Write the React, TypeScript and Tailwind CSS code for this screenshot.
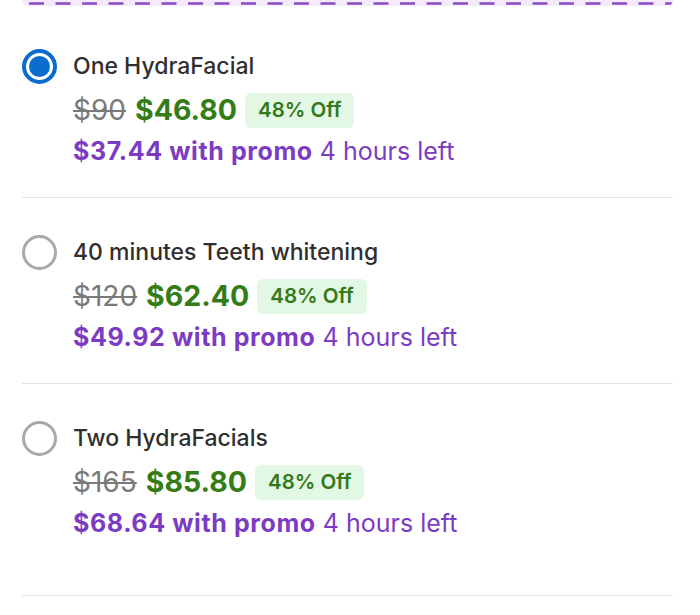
import React from "react";

interface IOption {
  id: number;
  title: string;
  original: string;
  price: string;
  discount: string;
  promo: string;
  timeLeft: string;
}

const options: IOption[] = [
  {
    id: 1,
    title: "One HydraFacial",
    original: "$90",
    price: "$46.80",
    discount: "48% Off",
    promo: "$37.44",
    timeLeft: "4 hours left",
  },
  {
    id: 2,
    title: "40 minutes Teeth whitening",
    original: "$120",
    price: "$62.40",
    discount: "48% Off",
    promo: "$49.92",
    timeLeft: "4 hours left",
  },
  {
    id: 3,
    title: "Two HydraFacials",
    original: "$165",
    price: "$85.80",
    discount: "48% Off",
    promo: "$68.64",
    timeLeft: "4 hours left",
  },
];

const Radio: React.FC<{ checked: boolean }> = ({ checked }) =>
  checked ? (
    <span className="flex items-center justify-center w-[35px] h-[35px] shrink-0 rounded-full border-[4px] border-[#0a6ccf] bg-white">
      <span className="w-[21px] h-[21px] rounded-full bg-[#0a6ccf]" />
    </span>
  ) : (
    <span className="w-[35px] h-[35px] shrink-0 rounded-full border-[3px] border-[#a9a9a9] bg-white" />
  );

const OptionRow: React.FC<{ item: IOption; checked: boolean; last: boolean; first: boolean }> = ({
  item,
  checked,
  last,
  first,
}) => (
  <li
    className={`flex flex-col border-b border-[#e4e4e4] ${first ? "pt-[45px]" : "pt-[39px]"} ${
      last ? "pb-[57px]" : "pb-[31px]"
    }`}
  >
    <div className="flex items-center gap-4 h-[30px]">
      <Radio checked={checked} />
      <span className="text-[23px] font-medium text-[#2f2f2f] leading-[30px]">{item.title}</span>
    </div>
    <div className="flex items-center pl-[51px] mt-[11px] h-[36px]">
      <span className="text-[28px] text-[#7a7a7a] line-through leading-none">{item.original}</span>
      <span className="ml-[9px] text-[28.5px] font-bold text-[#347d16] leading-none">{item.price}</span>
      <span className="ml-[8px] flex items-center h-[35px] px-[13px] rounded-md bg-[#e2f8e4] text-[20.5px] font-semibold text-[#34791a]">
        {item.discount}
      </span>
    </div>
    <p className="pl-[51px] mt-[8px] text-[25px] leading-[30px] text-[#7c3bc3]">
      <span className="font-bold tracking-[0.6px]">{item.promo} with promo</span> {item.timeLeft}
    </p>
  </li>
);

export default function App() {
  return (
    <div className="w-[700px] h-[615px] bg-white overflow-hidden font-['Inter',sans-serif]">
      <div className="pl-[22px] pr-[27px]">
        <div className="h-[6px] rounded-b-[6px] bg-[#f3ebfc] flex items-end overflow-hidden">
          <svg width="100%" height="3" className="block mb-[1px]">
            <line x1="7" y1="1.5" x2="100%" y2="1.5" stroke="#8a4cc2" strokeWidth="2.5" strokeDasharray="15 11.5" />
          </svg>
        </div>
        <ul className="flex flex-col">
          {options.map((item, i) => (
            <OptionRow
              key={item.id}
              item={item}
              checked={i === 0}
              first={i === 0}
              last={i === options.length - 1}
            />
          ))}
        </ul>
      </div>
    </div>
  );
}
